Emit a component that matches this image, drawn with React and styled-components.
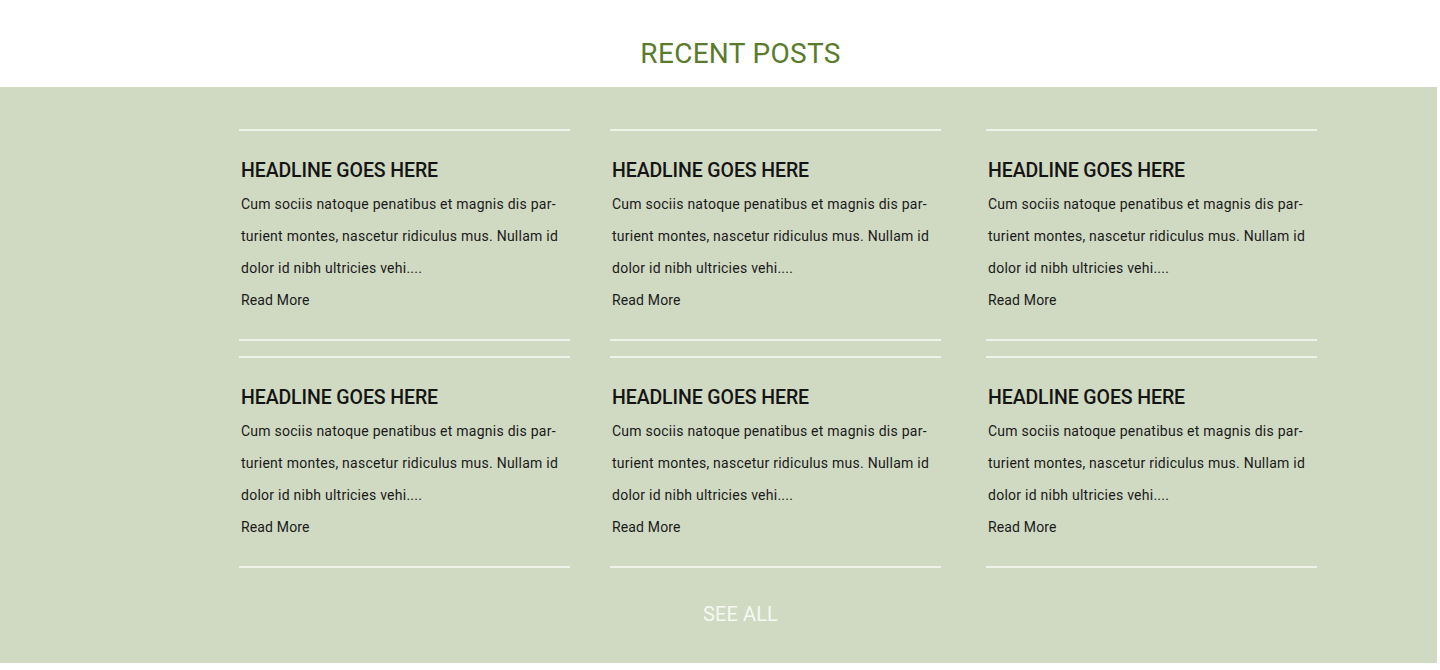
import React from "react";
import styled, { createGlobalStyle } from "styled-components";

const Global = createGlobalStyle`
  html, body { margin: 0; padding: 0; background: #ffffff; }
  body { font-family: Roboto, "Liberation Sans", sans-serif; }
`;

const Page = styled.div`
  width: 1440px;
  height: 670px;
  background: #ffffff;
  display: flex;
  flex-direction: column;
`;

const Header = styled.header`
  height: 87px;
  box-sizing: border-box;
  padding: 40px 0 0 41px;
  display: flex;
  justify-content: center;
`;

const Title = styled.h2`
  margin: 0;
  font-size: 28px;
  line-height: 28px;
  font-weight: 400;
  color: #5a7b2e;
  letter-spacing: 0.3px;
`;

const Band = styled.section`
  width: 1437px;
  background: #d0d9c2;
  box-sizing: border-box;
  padding: 42px 0 33px;
  display: flex;
  flex-direction: column;
`;

const Grid = styled.div`
  display: grid;
  grid-template-columns: 371px 376px 331px;
  row-gap: 15px;
  padding-left: 239px;
`;

const Card = styled.article`
  width: 331px;
  box-sizing: border-box;
  height: 212px;
  border-top: 2px solid #eef2e9;
  border-bottom: 2px solid #eef2e9;
  padding: 28px 0 0 2px;
  display: flex;
  flex-direction: column;
`;

const Headline = styled.h3`
  margin: 0 0 5px;
  font-size: 19.5px;
  line-height: 24px;
  font-weight: 500;
  color: #141414;
  letter-spacing: -0.1px;
`;

const Body = styled.p`
  margin: 0;
  font-size: 14px;
  line-height: 32px;
  color: #1a1a1a;
  width: 330px;
  letter-spacing: 0.25px;
`;

const ReadMore = styled.a`
  font-size: 14px;
  line-height: 32px;
  color: #1a1a1a;
  text-decoration: none;
  letter-spacing: 0.15px;
`;

const SeeAll = styled.a`
  align-self: center;
  margin: 30px 0 0 44px;
  font-size: 20px;
  line-height: 32px;
  color: #f6f8f2;
  text-decoration: none;
  letter-spacing: 0.1px;
`;

const posts = Array.from({ length: 6 }, (_, i) => i);

export default function App() {
  return (
    <Page>
      <Global />
      <Header>
        <Title>RECENT POSTS</Title>
      </Header>
      <Band>
        <Grid>
          {posts.map((i) => (
            <Card key={i}>
              <Headline>HEADLINE GOES HERE</Headline>
              <Body>
                Cum sociis natoque penatibus et magnis dis par-
                <br />
                turient montes, nascetur ridiculus mus. Nullam id
                <br />
                dolor id nibh ultricies vehi....
              </Body>
              <ReadMore href="#">Read More</ReadMore>
            </Card>
          ))}
        </Grid>
        <SeeAll href="#">SEE ALL</SeeAll>
      </Band>
    </Page>
  );
}
